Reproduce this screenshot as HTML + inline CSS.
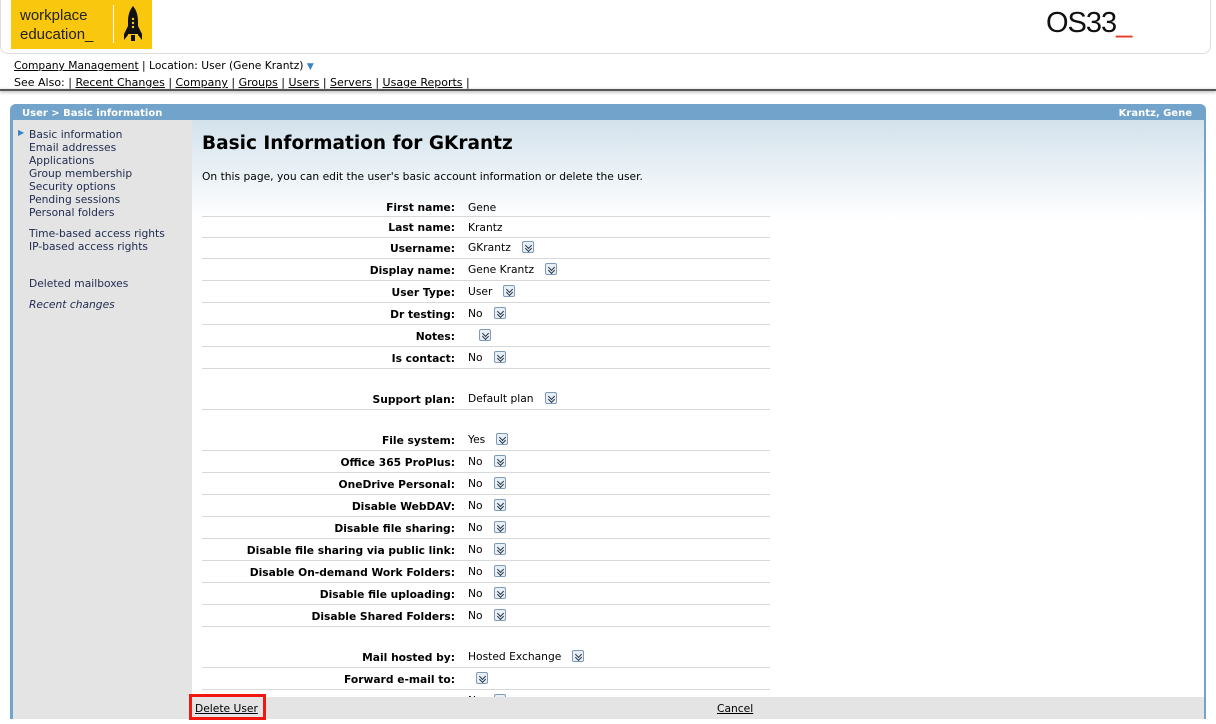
<!DOCTYPE html>
<html><head><meta charset="utf-8"><style>
*{margin:0;padding:0;box-sizing:border-box}
body{width:1216px;height:724px;background:#fff;font-family:"DejaVu Sans",Verdana,sans-serif;font-size:10.7px;color:#000;position:relative;overflow:hidden}
a{color:#000;text-decoration:underline}
.hdr{position:absolute;left:0;top:0;width:1211px;height:54px;border:1px solid #ddd;border-top:none;border-radius:0 0 8px 8px}
.logo{position:absolute;left:11px;top:0;width:141px;height:49px;background:#f9c80e}
.logo .t{position:absolute;left:9px;top:6px;font-family:"Liberation Sans",sans-serif;font-size:15px;line-height:19px;color:#222}
.logo .bar{position:absolute;left:102px;top:5px;width:1px;height:38px;background:#fff}
.os{position:absolute;left:1046px;top:7px;font-family:"Liberation Sans",sans-serif;font-size:29px;letter-spacing:-1px;color:#111}
.os span{color:#e53a2a}
.nav{position:absolute;left:14px;font-size:10.7px}
.shadow{position:absolute;left:0;top:89px;width:1216px;height:2px;background:#555;box-shadow:0 1px 3px #999}
.panel{position:absolute;left:10px;top:104px;width:1196px;height:615px;border-left:3px solid #72a4cb;border-right:2px solid #72a4cb;border-radius:6px 6px 0 0}
.ptitle{position:absolute;left:10px;top:104px;width:1196px;height:16px;background:#72a4cb;border-radius:6px 6px 0 0;color:#fff;font-weight:bold;font-size:10px;line-height:20px;padding:0 14px 0 12px}
.side{position:absolute;left:13px;top:120px;width:179px;height:599px;background:#e4e4e4}
.side div{position:absolute;left:16px;color:#1f2a4f;font-size:10.7px}
.main{position:absolute;left:192px;top:120px;width:1012px;height:577px;background:linear-gradient(#d3e2ec 0,#fff 100px);overflow:hidden}
h1{position:absolute;left:10px;top:13px;font-size:18.5px;font-weight:bold}
.row{position:absolute;left:10px;width:568px;border-bottom:1px solid #d8d8d8}
.row .l{position:absolute;right:315px;font-weight:bold}
.row .v{position:absolute;left:266px}
.ic{display:inline-block;width:12px;height:12px;border:1px solid #7d9bb6;border-radius:2px;background:#e7eef5;vertical-align:-2px;position:relative;margin-left:11px}
.ic:after{content:"";position:absolute;left:3px;top:1px;width:4px;height:4px;border-right:1.3px solid #234;border-bottom:1.3px solid #234;transform:rotate(45deg)}
.ic:before{content:"";position:absolute;left:3px;top:4px;width:4px;height:4px;border-right:1.3px solid #234;border-bottom:1.3px solid #234;transform:rotate(45deg)}
.foot{position:absolute;left:192px;top:697px;width:1012px;height:22px;background:#e4e4e4}
.del{position:absolute;left:189px;top:694px;width:77px;height:26px;border:3px solid #f0190f}
</style></head><body>
<div class="hdr"></div>
<div class="logo"><div class="t">workplace<br>education_</div><div class="bar"></div>
<svg style="position:absolute;left:113px;top:6px" width="18" height="36" viewBox="0 0 18 36"><path d="M9 0C5 5 4 10 4 16V28H14V16C14 10 13 5 9 0Z M4 20L0 28V34L4 29Z M14 20L18 28V34L14 29Z M7 29H11V35H7Z" fill="#111"/><circle cx="9" cy="13" r="1.2" fill="#f9c80e"/><circle cx="9" cy="17" r="1.2" fill="#f9c80e"/><circle cx="9" cy="21" r="1.2" fill="#f9c80e"/></svg></div>
<div class="os">OS33<span>_</span></div>
<div class="nav" style="top:59px"><a>Company Management</a> | Location: User (Gene Krantz) <span style="color:#3a83c3;font-size:9px">▼</span></div>
<div class="nav" style="top:76px;font-size:11px">See Also: | <a>Recent Changes</a> | <a>Company</a> | <a>Groups</a> | <a>Users</a> | <a>Servers</a> | <a>Usage Reports</a> |</div>
<div class="shadow"></div>
<div class="panel"></div>
<div class="ptitle">User &gt; Basic information<span style="float:right">Krantz, Gene</span></div>
<div class="side">
<div style="left:5px;top:8px;color:#3a83c3;font-size:8px">▶</div>
<div style="top:8px">Basic information</div><div style="top:21px">Email addresses</div><div style="top:34px">Applications</div><div style="top:47px">Group membership</div><div style="top:60px">Security options</div><div style="top:73px">Pending sessions</div><div style="top:86px">Personal folders</div>
<div style="top:107px">Time-based access rights</div><div style="top:120px">IP-based access rights</div>
<div style="top:157px">Deleted mailboxes</div><div style="top:178px;font-style:italic">Recent changes</div>
</div>
<div class="main">
<h1>Basic Information for GKrantz</h1>
<div style="position:absolute;left:10px;top:50px">On this page, you can edit the user's basic account information or delete the user.</div>
<div class="row" style="top:75px;height:22px"><span class="l" style="top:6px">First name:</span><span class="v" style="top:6px">Gene</span></div>
<div class="row" style="top:97px;height:21px"><span class="l" style="top:4px">Last name:</span><span class="v" style="top:4px">Krantz</span></div>
<div class="row" style="top:118px;height:21px"><span class="l" style="top:4px">Username:</span><span class="v" style="top:3px">GKrantz<i class="ic"></i></span></div>
<div class="row" style="top:139px;height:22px"><span class="l" style="top:5px">Display name:</span><span class="v" style="top:4px">Gene Krantz<i class="ic"></i></span></div>
<div class="row" style="top:161px;height:22px"><span class="l" style="top:5px">User Type:</span><span class="v" style="top:4px">User<i class="ic"></i></span></div>
<div class="row" style="top:183px;height:22px"><span class="l" style="top:5px">Dr testing:</span><span class="v" style="top:4px">No<i class="ic"></i></span></div>
<div class="row" style="top:205px;height:22px"><span class="l" style="top:5px">Notes:</span><span class="v" style="top:4px"><i class="ic"></i></span></div>
<div class="row" style="top:227px;height:22px"><span class="l" style="top:5px">Is contact:</span><span class="v" style="top:4px">No<i class="ic"></i></span></div>
<div class="row" style="top:249px;height:41px"><span class="l" style="top:24px">Support plan:</span><span class="v" style="top:23px">Default plan<i class="ic"></i></span></div>
<div class="row" style="top:290px;height:41px"><span class="l" style="top:24px">File system:</span><span class="v" style="top:23px">Yes<i class="ic"></i></span></div>
<div class="row" style="top:331px;height:22px"><span class="l" style="top:5px">Office 365 ProPlus:</span><span class="v" style="top:4px">No<i class="ic"></i></span></div>
<div class="row" style="top:353px;height:22px"><span class="l" style="top:5px">OneDrive Personal:</span><span class="v" style="top:4px">No<i class="ic"></i></span></div>
<div class="row" style="top:375px;height:22px"><span class="l" style="top:5px">Disable WebDAV:</span><span class="v" style="top:4px">No<i class="ic"></i></span></div>
<div class="row" style="top:397px;height:22px"><span class="l" style="top:5px">Disable file sharing:</span><span class="v" style="top:4px">No<i class="ic"></i></span></div>
<div class="row" style="top:419px;height:22px"><span class="l" style="top:5px">Disable file sharing via public link:</span><span class="v" style="top:4px">No<i class="ic"></i></span></div>
<div class="row" style="top:441px;height:22px"><span class="l" style="top:5px">Disable On-demand Work Folders:</span><span class="v" style="top:4px">No<i class="ic"></i></span></div>
<div class="row" style="top:463px;height:22px"><span class="l" style="top:5px">Disable file uploading:</span><span class="v" style="top:4px">No<i class="ic"></i></span></div>
<div class="row" style="top:485px;height:22px"><span class="l" style="top:5px">Disable Shared Folders:</span><span class="v" style="top:4px">No<i class="ic"></i></span></div>
<div class="row" style="top:507px;height:41px"><span class="l" style="top:24px">Mail hosted by:</span><span class="v" style="top:23px">Hosted Exchange<i class="ic"></i></span></div>
<div class="row" style="top:548px;height:22px"><span class="l" style="top:5px">Forward e-mail to:</span><span class="v" style="top:4px"><i class="ic" style="margin-left:8px"></i></span></div>
<div class="row" style="top:570px;height:22px"><span class="l" style="top:5px">Forward mail as attachment:</span><span class="v" style="top:4px">No<i class="ic"></i></span></div>
</div>
<div class="foot"><a style="position:absolute;left:3px;top:5px">Delete User</a><a style="position:absolute;left:525px;top:5px">Cancel</a></div>
<div class="del"></div>
</body></html>
